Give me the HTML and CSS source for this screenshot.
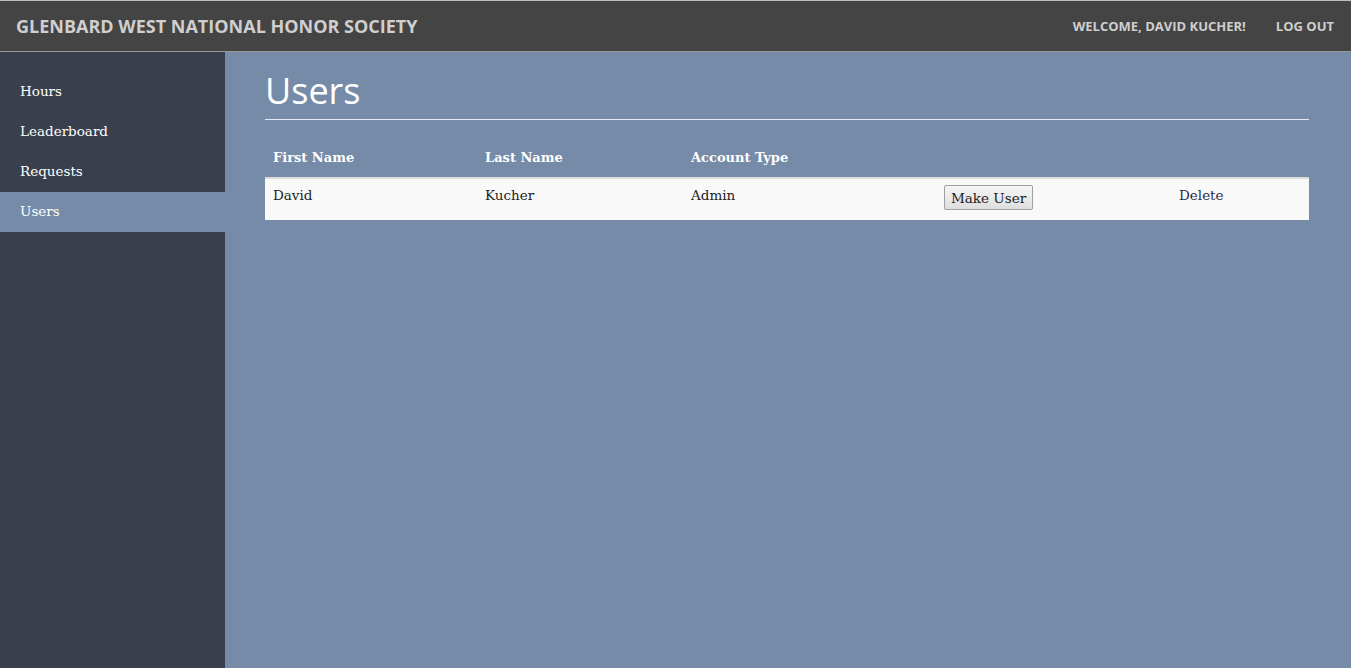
FILE: index.html
```html
<!DOCTYPE html>
<html>
<head>
<meta charset="utf-8">
<link rel="stylesheet" href="styles.css">
</head>
<body>
<header class="topbar">
  <div class="brand">GLENBARD WEST NATIONAL HONOR SOCIETY</div>
  <nav class="usernav">
    <span class="welcome">WELCOME, DAVID KUCHER!</span>
    <a class="logout" href="#">LOG OUT</a>
  </nav>
</header>
<div class="layout">
  <aside class="sidebar">
    <a class="navitem" href="#">Hours</a>
    <a class="navitem" href="#">Leaderboard</a>
    <a class="navitem" href="#">Requests</a>
    <a class="navitem active" href="#">Users</a>
  </aside>
  <main class="content">
    <h1 class="title">Users</h1>
    <table class="users">
      <thead>
        <tr>
          <th class="c1">First Name</th>
          <th class="c2">Last Name</th>
          <th class="c3">Account Type</th>
          <th class="c4"></th>
          <th class="c5"></th>
        </tr>
      </thead>
      <tbody>
        <tr>
          <td>David</td>
          <td>Kucher</td>
          <td>Admin</td>
          <td class="btncell"><button class="btn">Make User</button></td>
          <td><a class="del" href="#">Delete</a></td>
        </tr>
      </tbody>
    </table>
  </main>
</div>
</body>
</html>
```
FILE: styles.css
```css
html, body {
  margin: 0;
  padding: 0;
  height: 100%;
}
body {
  font-family: "DejaVu Serif", serif;
  background: #758ba8;
  border-top: 1px solid #bdbdbd;
  box-sizing: border-box;
  display: flex;
  flex-direction: column;
}
.topbar {
  height: 50px;
  background: #444444;
  border-bottom: 1px solid #9a9a9a;
  display: flex;
  align-items: center;
  justify-content: space-between;
  padding: 0 17px 0 16px;
  font-family: "Open Sans", sans-serif;
  font-weight: 700;
  color: #cfcfcf;
}
.brand {
  font-size: 18px;
}
.usernav {
  display: flex;
  gap: 30px;
  font-size: 13px;
}
.logout {
  color: #cfcfcf;
  text-decoration: none;
}
.layout {
  flex: 1;
  display: flex;
}
.sidebar {
  width: 225px;
  background: #393f4c;
  padding-top: 20px;
  display: flex;
  flex-direction: column;
}
.navitem {
  height: 40px;
  line-height: 39px;
  padding-left: 20px;
  color: #ffffff;
  text-decoration: none;
  font-size: 13.5px;
}
.navitem.active {
  background: #758ba8;
}
.content {
  flex: 1;
  padding: 0 42px 0 40px;
}
.title {
  font-family: "Open Sans", sans-serif;
  font-weight: 400;
  font-size: 36px;
  color: #ffffff;
  margin: 17px 0 0;
  line-height: 44px;
  padding-bottom: 6px;
  border-bottom: 1px solid #e6e9ef;
}
.users {
  width: 100%;
  border-collapse: collapse;
  margin-top: 20px;
  font-size: 13.5px;
}
.users th {
  text-align: left;
  color: #ffffff;
  font-weight: 700;
  font-size: 13px;
  padding: 8px 8px 9px;
  line-height: 20px;
}
.users td {
  background: #f9f9f9;
  border-top: 2px solid #dddddd;
  color: #222222;
  padding: 6px 8px 10px;
  line-height: 20px;
  vertical-align: top;
}
.c1 { width: 196px; }
.c2 { width: 190px; }
.c3 { width: 237px; }
.c4 { width: 219px; }
.btncell { padding-top: 7px; }
.btn {
  font-family: "DejaVu Serif", serif;
  font-size: 13.5px;
  color: #222;
  background: linear-gradient(#f6f6f6, #dedede);
  border: 1px solid #a0a0a0;
  border-radius: 2px;
  padding: 3px 6px 2px;
  margin: 0;
  line-height: 18px;
}
.del {
  color: #2b2b4a;
  text-decoration: none;
}
```
